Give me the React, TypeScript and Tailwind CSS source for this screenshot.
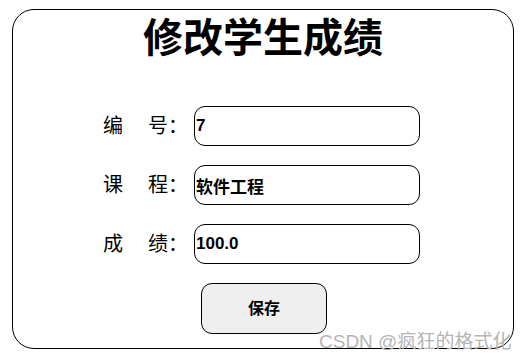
const FONT = "font-['Liberation_Sans','Noto_Sans_CJK_SC',sans-serif]";

function Field({ first, second, value }: { first: string; second: string; value: string }) {
  return (
    <div className="flex items-center pl-[90px]">
      <label className="w-[91px] flex text-[20px] leading-none text-black">
        <span>{first}</span>
        <span className="w-[25px]" />
        <span>{second}：</span>
      </label>
      <input
        defaultValue={value}
        className={`w-[226px] h-[40px] rounded-[11px] border border-black bg-white pl-[1px] text-[17px] font-bold text-black outline-none ${FONT}`}
      />
    </div>
  );
}

export default function App() {
  return (
    <div className={`relative w-[526px] h-[362px] bg-white pt-[9px] pl-[12px] ${FONT}`}>
      <div className="w-[502px] h-[340px] rounded-[22px] border border-black flex flex-col">
        {/* Title */}
        <h1 className="text-center text-[40px] font-bold leading-none pt-[8px] text-black">修改学生成绩</h1>

        {/* Form */}
        <div className="mt-[48px] flex flex-col gap-[19px]">
          <Field first="编" second="号" value="7" />
          <Field first="课" second="程" value="软件工程" />
          <Field first="成" second="绩" value="100.0" />
        </div>

        <div className="mt-[19px] flex justify-center pl-[2px]">
          <button
            type="button"
            className="w-[126px] h-[51px] rounded-[11px] border border-black bg-[#efefef] text-[16px] font-bold text-black"
          >
            保存
          </button>
        </div>
      </div>

      {/* Watermark */}
      <span className="absolute left-[319px] top-[332px] text-[19px] leading-none text-[#b5b5b5] whitespace-nowrap">
        CSDN @疯狂的格式化
      </span>
    </div>
  );
}
